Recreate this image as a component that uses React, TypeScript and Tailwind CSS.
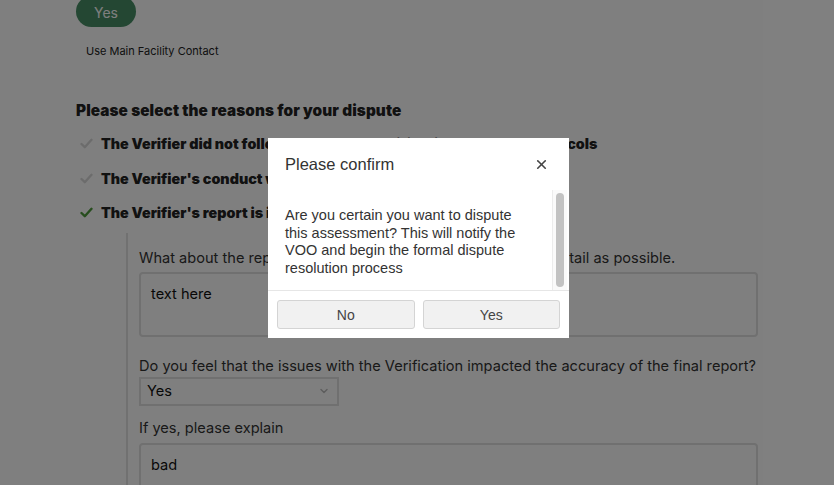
import { X, ChevronDown } from 'lucide-react';

const reasons = [
  { label: 'The Verifier did not follow the correct Verification rules and protocols', checked: false },
  { label: "The Verifier's conduct was unprofessional", checked: false },
  { label: "The Verifier's report is inaccurate", checked: true },
];

function Check({ on }: { on: boolean }) {
  return (
    <svg width="13" height="11" viewBox="0 0 13 11" className="shrink-0">
      <path
        d="M1.5 6 L4.8 9.2 L11.5 1.8"
        fill="none"
        stroke={on ? '#4e9a3c' : '#d9d9d9'}
        strokeWidth="2.4"
        strokeLinecap="round"
        strokeLinejoin="round"
      />
    </svg>
  );
}

function ConfirmModal() {
  return (
    <div className="absolute left-[268px] top-[138px] w-[301px] h-[200px] bg-white flex flex-col font-['Liberation_Sans',sans-serif]">
      <div className="h-[52px] flex items-center justify-between pl-[17px] pr-[20px]">
        <span className="text-[16.5px] text-[#333]">Please confirm</span>
        <X className="w-[15px] h-[15px] text-[#444]" strokeWidth={2.6} />
      </div>
      <div className="flex h-[101px] border-b border-[#e6e6e6]">
        <div className="flex-1 pl-[17px] pr-[28px] pt-[17px] text-[14.5px] leading-[17.7px] text-[#333]">
          Are you certain you want to dispute this assessment? This will notify the VOO and begin the formal dispute resolution process
        </div>
        <div className="w-[15px] mr-[2px] border-l border-[#ececec] bg-[#fafafa] py-[3px] flex justify-center">
          <div className="w-[8px] h-full rounded-full bg-[#c2c2c2]" />
        </div>
      </div>
      <div className="flex gap-2 px-[9px] pt-[9px]">
        <button className="flex-1 h-[29px] rounded-[3px] border border-[#d4d4d4] bg-[#f1f1f1] text-[14px] text-[#444] pt-[1px]">
          No
        </button>
        <button className="flex-1 h-[29px] rounded-[3px] border border-[#d4d4d4] bg-[#f1f1f1] text-[14px] text-[#444] pt-[1px]">
          Yes
        </button>
      </div>
    </div>
  );
}

export default function App() {
  return (
    <div className="relative w-[834px] h-[485px] overflow-hidden bg-white font-['Inter',sans-serif] text-[#2b2b2b]">
      <div className="pl-[76px] pr-[76px]">
        <button className="-mt-[6px] w-[60px] h-[31px] rounded-full bg-[#488f66] text-white text-[14px] pt-[3px]">
          Yes
        </button>
        <div className="mt-[16px] pl-[10px] text-[11px] text-[#222]">Use Main Facility Contact</div>

        <h2 className="mt-[41px] text-[15.3px] font-black text-[#222] tracking-[0.1px]">
          Please select the reasons for your dispute
        </h2>

        <div className="mt-[10px] flex flex-col">
          {reasons.map((r, i) => (
            <div
              key={r.label}
              className={`flex items-center gap-[8px] pl-[4px] h-[22px] ${i === 1 ? 'mt-[13px]' : i === 2 ? 'mt-[12px]' : ''}`}
            >
              <Check on={r.checked} />
              <span className="text-[14.3px] font-black text-[#222]">{r.label}</span>
            </div>
          ))}
        </div>

        <div className="ml-[50px] mt-[9px] border-l-2 border-[#e2e2e2] pl-[11px] pt-[15px] text-[14.6px] leading-[21px]">
          <div className="text-[#333]">
            What about the report is incorrect? Please provide as much detail as possible.
          </div>
          <div className="mt-[3px] h-[65px] rounded-[4px] border-2 border-[#e0e0e0] px-[10px] pt-[10px] text-[#111]">
            text here
          </div>

          <div className="mt-[19px] text-[#333]">
            Do you feel that the issues with the Verification impacted the accuracy of the final report?
          </div>
          <div className="w-[200px] h-[29px] border-2 border-[#e0e0e0] flex items-center justify-between pl-[6px] pr-[7px] text-[#111]">
            <span>Yes</span>
            <ChevronDown className="w-[12px] h-[12px] text-[#bbb]" strokeWidth={3} />
          </div>

          <div className="mt-[12px] text-[#333]">If yes, please explain</div>
          <div className="mt-[4px] h-[65px] rounded-[4px] border-2 border-[#e0e0e0] px-[10px] pt-[10px] text-[#111]">
            bad
          </div>
        </div>
      </div>

      <div className="absolute inset-0 bg-black/50" />
      <ConfirmModal />
    </div>
  );
}
